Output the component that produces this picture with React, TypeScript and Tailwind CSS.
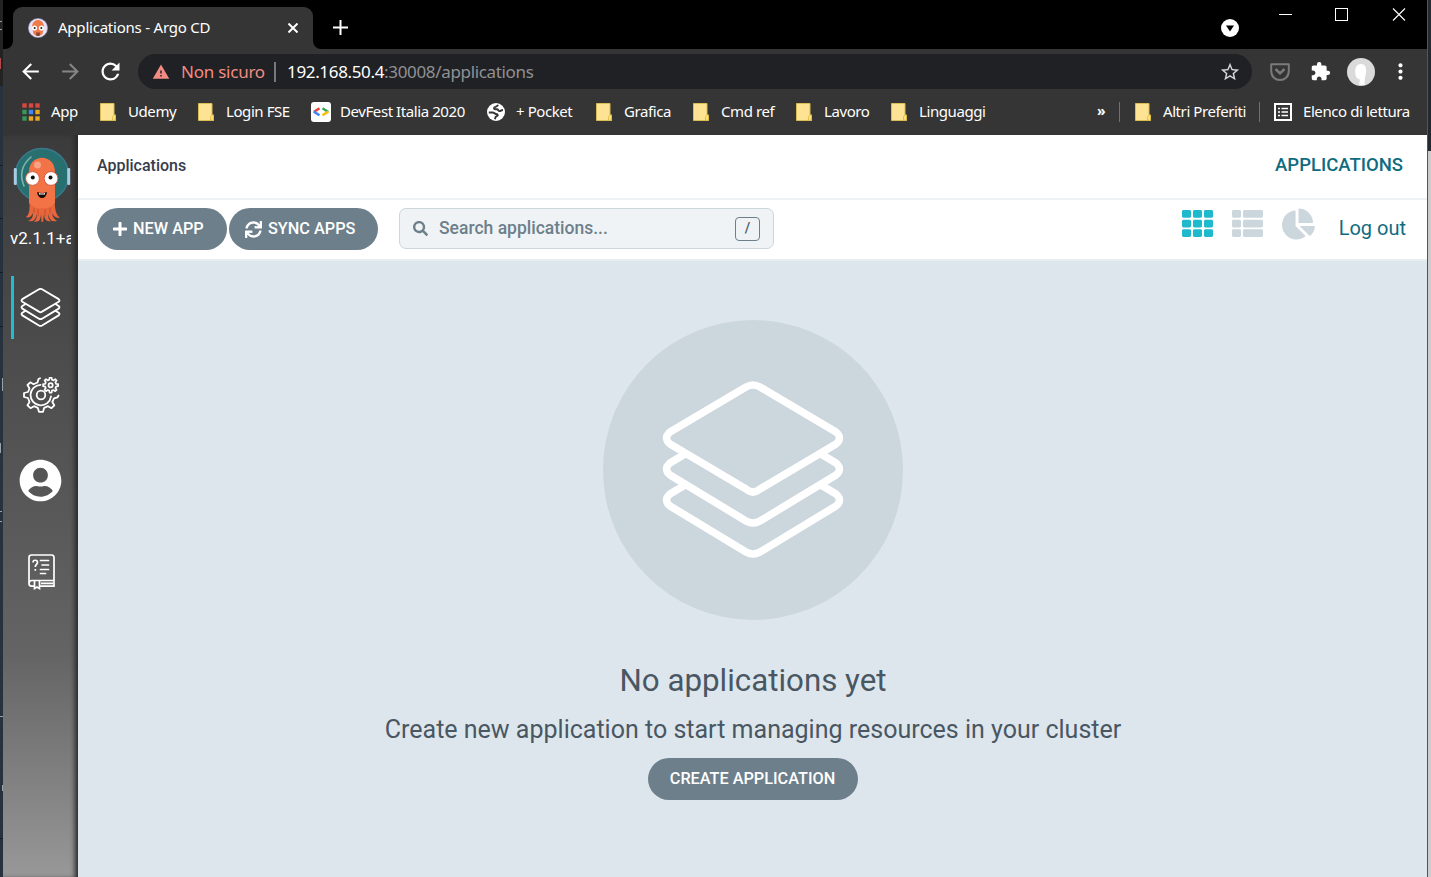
import React from 'react';
import { FaPlus, FaSearch, FaUserCircle, FaTh, FaThList, FaChartPie, FaSync } from 'react-icons/fa';
import { MdArrowBack, MdArrowForward, MdRefresh, MdWarning, MdStarBorder, MdExtension, MdMoreVert } from 'react-icons/md';

const Layers = ({ className, stroke = 7 }: { className: string; stroke?: number }) => (
  <svg className={className} viewBox="0 0 182 178" fill="none" stroke="white" strokeWidth={stroke} strokeLinejoin="round">
    <path d="M84 6 Q91 2 98 6 L174 51 Q181 57 174 63 L98 108 Q91 114 84 108 L8 63 Q1 57 8 51Z" />
    <path d="M23 73 L8 82 Q1 88 8 94 L84 140 Q91 144 98 140 L174 94 Q181 88 174 82 L159 73" />
    <path d="M23 104 L8 113 Q1 119 8 125 L84 171 Q91 175 98 171 L174 125 Q181 119 174 113 L159 104" />
  </svg>
);

const Folder = () => (
  <svg className="block h-[18px] w-[16px]" viewBox="0 0 16 18">
    <path d="M.5.5H14V12H15.5V17.5H.5Z" fill="#ffe394" stroke="#d9bd52" />
    <path d="M12.5 17V13.5L14 12H15.5V17.5Z" fill="#ffe27a" stroke="#d9b93d" strokeWidth=".8" />
  </svg>
);

const AppsGrid = () => (
  <svg className="block h-[18px] w-[18px]" viewBox="0 0 18 18">
    {['#d9473f', '#d9473f', '#d9473f', '#36995a', '#4285f4', '#e9a821', '#36995a', '#e9a821', '#e9a821'].map((c, i) => (
      <rect key={i} x={(i % 3) * 6.5 + 0.3} y={Math.floor(i / 3) * 6.5 + 0.3} width="4.4" height="4.4" fill={c} />
    ))}
  </svg>
);

const DevFest = () => (
  <svg className="block h-5 w-5" viewBox="0 0 20 20" fill="none" strokeWidth="2.5">
    <rect width="20" height="20" rx="3" fill="#fff" />
    <path d="M8.5 6.3 2.8 10" stroke="#ea4335" />
    <path d="M2.8 9.6 8.5 13.2" stroke="#4285f4" />
    <path d="M11.5 6.3 17.2 10" stroke="#34a853" />
    <path d="M17.2 9.6 11.5 13.2" stroke="#fbbc04" />
  </svg>
);

const Globe = () => (
  <svg className="block h-[18px] w-[18px]" viewBox="0 0 18 18" fill="none" stroke="#353535">
    <circle cx="9" cy="9" r="9" fill="#fff" stroke="none" />
    <path d="M1.800 9.500H5.500C7.500 9.500 7.500 11 9 11 11 11 11.500 12.800 9.500 13.200 8 13.500 8.300 15 8 16.200" strokeWidth="1.900" />
    <path d="M11 1.800C10.500 3.500 9.500 3.500 8.500 3.800 6.500 4.300 6.500 6.300 8.500 6.300H10C11.500 6.300 11 8 12.500 8S14 7 16 7" strokeWidth="1.900" />
  </svg>
);

const ReadingList = () => (
  <svg className="block h-[18px] w-[18px]" viewBox="0 0 18 18" fill="none" stroke="#fff">
    <rect x="1" y="1" width="16" height="16" strokeWidth="2" />
    <path d="M4 5.500H6M4 9H6M4 12.500H6M7.500 5.500H14M7.500 9H14M7.500 12.500H14" strokeWidth="1.700" />
  </svg>
);

const Favicon = () => (
  <svg className="block h-5 w-5" viewBox="0 0 20 20">
    <circle cx="10" cy="10" r="9.600" fill="#e8e4f4" stroke="#9e97c9" strokeWidth=".6" />
    <path d="M4 9C4 -.5 16 -.5 16 9L14.500 16Q10 20 5.500 16Z" fill="#ef7b4d" />
    <circle cx="6.500" cy="10" r="2.600" fill="#fff" />
    <circle cx="13.500" cy="10" r="2.600" fill="#fff" />
    <circle cx="6.700" cy="10" r="1" fill="#222" />
    <circle cx="13.300" cy="10" r="1" fill="#222" />
    <path d="M8 14.500H12L11.500 18H8.500Z" fill="#8c4630" />
  </svg>
);

const ArgoLogo = () => (
  <svg className="block h-[76px] w-[58px]" viewBox="0 0 58 76">
    <circle cx="29" cy="28" r="27" fill="#27706f" />
    <circle cx="29" cy="28" r="26.500" fill="none" stroke="#39788c" strokeWidth="1.500" />
    <path d="M11 39Q4 22 18 10" fill="none" stroke="#7fb2ae" strokeWidth="1.600" strokeLinecap="round" />
    <rect x=".8" y="21" width="3" height="17" rx="1.200" fill="#a9cce4" />
    <rect x="54.200" y="21" width="3" height="17" rx="1.200" fill="#a9cce4" />
    <path d="M16.500 54C17 63 16 68 13 70Q17 72 20 66C20 71 18 73 15 74Q22 76 24 67C24 71 23 73 21 74.500Q28 76 28 67L28.500 75H30L31 67Q31 75 38 74.500C36 73 35 71 35 67Q37 76 44 74Q40 72 39 66Q42 72 47 70.500C43 68 42 63 41.500 54Z" fill="#e8663b" />
    <path d="M16 56V25C16 6 42 6 42 25V56Q35 63 29 61Q23 63 16 56Z" fill="#f27346" />
    <circle cx="24.500" cy="18" r="3.500" fill="#f8a286" />
    <circle cx="19.500" cy="31.500" r="6.900" fill="#fff" stroke="#d9573a" />
    <circle cx="38" cy="31.500" r="6.900" fill="#fff" stroke="#d9573a" />
    <circle cx="19.800" cy="30.500" r="2" fill="#111" />
    <circle cx="37.500" cy="30.500" r="2" fill="#111" />
    <path d="M24 45Q29 47 34 45Q33 51 29 51T24 45" fill="#170b09" />
    <path d="M26 46Q29 47 32 46V47.500H26Z" fill="#fff" />
    <path d="M21 61V66M25 62V69M32 62V69M37 61V66" stroke="#bd482f" strokeWidth=".8" />
  </svg>
);

const gearPath = (cx: number, cy: number, r: number, inner: number, teeth: number) => {
  const pts: string[] = [];
  const step = (Math.PI * 2) / teeth;
  for (let i = 0; i < teeth; i++) {
    const a = i * step - Math.PI / 2;
    [[-0.31, inner], [-0.17, r], [0.17, r], [0.31, inner]].forEach(([o, q]) => {
      pts.push(`${(cx + Math.cos(a + o * step) * q).toFixed(2)} ${(cy + Math.sin(a + o * step) * q).toFixed(2)}`);
    });
  }
  return `M${pts.join('L')}Z`;
};

const Gears = () => (
  <svg className="block h-[36px] w-[37px]" viewBox="0 0 37 36" fill="none" stroke="#fff" strokeWidth="1.800" strokeLinejoin="round" strokeLinecap="round">
    <path d="M17 1.200 15.500 2 14.500 5.500 10.500 7.300 7.300 5.300 4.500 8 6.500 11.500 5 15 1 16V20L5 21 6.500 25 4.500 28.300 7.500 31.200 11 29.200 14.800 30.800 16 34.800H20L21.200 30.800 25 29.200 28.500 31.200 31.300 28.300 29.300 25 31 21.300 34.500 20.300 35.500 18.500" />
    <path d="M17.500 7.800A10.300 10.300 0 1 0 28 19.500" />
    <circle cx="18" cy="18" r="4.300" />
    <path d={gearPath(27.6, 8.2, 7.6, 5.6, 8)} strokeWidth="1.700" />
    <circle cx="27.600" cy="8.200" r="2.100" />
  </svg>
);

const Docs = () => (
  <svg className="block h-[36px] w-[27px]" viewBox="0 0 27 36" fill="none" stroke="#fff" strokeWidth="1.700">
    <path d="M6 32.200H3.500Q1 32 1 29.500V3.500Q1 1 3.500 1H23.500Q26 1 26 3.500V26.500H3.500Q1 27 1 29.500M12 32.200H26V26.500M13 29.300H25" />
    <path d="M6.500 27V34.500L9 33 11.500 34.500V27" />
    <path d="M12.500 6.500H20.500M14 11H20.500M12.500 15.500H20.500M12.500 19.500H17.500" strokeLinecap="round" />
    <path d="M5 8.500C5 5.500 9.500 5.500 9.500 8.500 9.500 10.500 7.300 10.300 7.300 13M7.300 15V16.800" />
  </svg>
);

const Pocket = () => (
  <svg className="block h-[18px] w-5" viewBox="0 0 20 18" fill="none" stroke="#7b7b7b" strokeWidth="2">
    <path d="M1.200 1.200H18.800V8C18.800 20 1.200 20 1.200 8Z" strokeLinejoin="round" />
    <path d="M5.500 6 10 10.300 14.500 6" strokeWidth="2.500" />
  </svg>
);

const Avatar = () => (
  <svg className="block h-7 w-7" viewBox="0 0 28 28">
    <circle cx="14" cy="14" r="14" fill="#dadada" />
    <path d="M14 6C10 6 8 9 8.200 14S10 21 13 21.500L12 26.500 17.500 27 18 19C20 14 20 6 14 6Z" fill="#fff" />
  </svg>
);

const Mark = ({ icon, label, box, gap }: { icon: React.ReactNode; label: string; box: string; gap: string }) => (
  <div className={`flex shrink-0 items-center whitespace-nowrap tracking-[-0.42px] ${box}`}>
    <div className={`shrink-0 ${gap}`}>{icon}</div>
    <span>{label}</span>
  </div>
);

function TabStrip() {
  return (
    <div className="flex h-[49px] shrink-0 bg-black text-white">
      <div className="w-[10px] bg-[#353535]"><div className="h-full w-full rounded-br-[8px] bg-black" /></div>
      <div className="flex w-[300px] flex-col bg-black pt-[7px]">
        <div className="flex h-[42px] items-center rounded-t-[9px] bg-[#353535] pl-[15px]">
          <Favicon />
          <span className="ml-[10px] w-[230px] whitespace-nowrap pb-[2px] text-[15px] tracking-[-0.22px]">Applications - Argo CD</span>
          <svg className="block h-[10px] w-[10px] shrink-0" viewBox="0 0 10 10" stroke="#fff" strokeWidth="2"><path d="M.5.5 9.500 9.500M9.500.5.5 9.500" /></svg>
        </div>
      </div>
      <div className="flex grow bg-[#353535]">
        <div className="flex grow rounded-bl-[8px] bg-black">
          <svg className="ml-[20px] mt-[20px] h-[15px] w-[15px]" viewBox="0 0 15 15" stroke="#fff" strokeWidth="2"><path d="M0 7.500H15M7.500 0V15" /></svg>
          <div className="grow" />
          <svg className="mr-[40px] mt-[19px] h-[18px] w-[18px]" viewBox="0 0 18 18"><circle cx="9" cy="9" r="9" fill="#fff" /><path d="M5 6.500H13L9 12.500Z" fill="#000" /></svg>
          <svg className="mr-[21px] mt-[8px] h-[13px] w-[127px]" viewBox="0 0 127 13" fill="none" stroke="#fff">
            <path d="M0 6.500H13" /><rect x="56.500" y=".5" width="12" height="12" /><path d="M114 .5 126 12.500M126 .5 114 12.500" strokeWidth="1.100" />
          </svg>
        </div>
      </div>
    </div>
  );
}

function Toolbar() {
  return (
    <div className="flex h-[45px] shrink-0 items-center text-white">
      <MdArrowBack className="ml-[15px] h-[25px] w-[25px]" />
      <MdArrowForward className="ml-[15px] h-[25px] w-[25px] text-[#858585]" />
      <MdRefresh className="ml-[14px] h-[27px] w-[27px]" />
      <div className="ml-[14px] flex h-[35px] w-[1114px] items-center rounded-full bg-[#202124] pl-[14px] text-[17px]">
        <MdWarning className="h-[18px] w-[18px] text-[#f28b82]" />
        <span className="ml-[11px] w-[93px] whitespace-nowrap tracking-[-0.24px] text-[#f28b82]">Non sicuro</span>
        <span className="h-5 w-[2px] bg-[#77787b]" />
        <span className="ml-[11px] grow whitespace-nowrap tracking-[-0.34px]">192.168.50.4<span className="text-[#909194]">:30008/applications</span></span>
        <MdStarBorder className="mr-[11px] h-[22px] w-[22px] text-[#d6d6d8]" />
      </div>
      <div className="ml-[18px]"><Pocket /></div>
      <MdExtension className="ml-[20px] h-[21px] w-[21px]" />
      <div className="ml-[16px]"><Avatar /></div>
      <MdMoreVert className="ml-[13px] h-[25px] w-[25px]" />
    </div>
  );
}

function Bookmarks() {
  return (
    <div className="flex h-[41px] shrink-0 items-center pb-[6px] pl-[19px] text-[15px] text-white">
      <Mark icon={<AppsGrid />} label="App" box="w-[78px]" gap="w-[29px]" />
      <Mark icon={<Folder />} label="Udemy" box="w-[98px]" gap="w-[28px]" />
      <Mark icon={<Folder />} label="Login FSE" box="w-[113px]" gap="w-[28px]" />
      <Mark icon={<DevFest />} label="DevFest Italia 2020" box="w-[176px]" gap="w-[29px]" />
      <Mark icon={<Globe />} label="+ Pocket" box="w-[109px]" gap="w-[29px]" />
      <Mark icon={<Folder />} label="Grafica" box="w-[97px]" gap="w-[28px]" />
      <Mark icon={<Folder />} label="Cmd ref" box="w-[103px]" gap="w-[28px]" />
      <Mark icon={<Folder />} label="Lavoro" box="w-[95px]" gap="w-[28px]" />
      <Mark icon={<Folder />} label="Linguaggi" box="w-[206px]" gap="w-[28px]" />
      <span className="w-[22px] pb-[3px] text-[14px] font-bold">»</span>
      <span className="mr-[15px] h-5 w-px bg-[#707070]" />
      <Mark icon={<Folder />} label="Altri Preferiti" box="w-[124px]" gap="w-[28px]" />
      <span className="mr-[14px] h-5 w-px bg-[#707070]" />
      <Mark icon={<ReadingList />} label="Elenco di lettura" box="w-[140px]" gap="w-[29px]" />
    </div>
  );
}

function Sidebar() {
  return (
    <aside className="flex w-[75px] shrink-0 flex-col bg-linear-to-b from-[#3b3b3b] via-[#646464] via-70% to-[#989898] shadow-[inset_-5px_0_5px_-2px_#292929]">
      <div className="ml-[10px] mt-[12px]"><ArgoLogo /></div>
      <div className="ml-[7px] mt-[3px] h-[24px] w-[61px] overflow-hidden whitespace-nowrap font-[Roboto] text-[17px] leading-6 text-white">v2.1.1+a</div>
      <div className="ml-[8px] mt-[26px] flex h-[63px] items-center border-l-[3px] border-[#1fbdd0] pl-[6px]"><Layers className="h-[39px] w-[41px]" stroke={8.5} /></div>
      <div className="ml-[20px] mt-[38px]"><Gears /></div>
      <FaUserCircle className="ml-[16px] mt-[46px] h-[43px] w-[43px] text-white" />
      <div className="ml-[25px] mt-[52px]"><Docs /></div>
    </aside>
  );
}

function Content() {
  return (
    <main className="flex grow flex-col bg-[#dee6ed] font-[Roboto]">
      <div className="flex h-[63px] items-center justify-between bg-white pl-[19px] pr-[24px] font-medium">
        <span className="pb-[2px] text-[16px] text-[#363c4a]">Applications</span>
        <span className="pb-[2px] text-[18.500px] text-[#0f6c80]">APPLICATIONS</span>
      </div>
      <div className="flex h-[63px] items-center border-y-2 border-b-[#e8edf0] border-t-[#eef2f4] bg-white pb-[1px] pl-[19px]">
        <button className="flex h-[42px] w-[130px] items-center rounded-full bg-[#6d7f8b] pl-[15px] text-[16.300px] font-medium text-white"><FaPlus className="mr-[5px] h-4 w-4" /><span className="whitespace-nowrap">NEW APP</span></button>
        <button className="ml-[2px] flex h-[42px] w-[149px] items-center rounded-full bg-[#6d7f8b] pl-[16px] text-[16.300px] font-medium text-white"><FaSync className="mr-[6px] h-[17px] w-[17px]" /><span className="whitespace-nowrap">SYNC APPS</span></button>
        <div className="mb-[2px] ml-[21px] flex h-[41px] w-[375px] items-center rounded-[7px] border border-[#ccd6dd] bg-[#eff3f5] pl-[13px] pr-[13px] text-[#6d7f8b]">
          <FaSearch className="mr-[11px] h-[15px] w-[15px]" /><span className="grow text-[17.500px] font-medium">Search applications...</span>
          <span className="mt-px flex h-6 w-[25px] items-center justify-center rounded-[4px] border border-[#6d7f8b] text-[14px] font-medium text-[#495763]">/</span>
        </div>
        <div className="grow" />
        <div className="flex items-center pb-[11px]">
          <FaTh className="h-[31px] w-[31px] text-[#1fb9ce]" />
          <FaThList className="ml-[19px] h-[31px] w-[31px] text-[#ccd6dd]" />
          <FaChartPie className="ml-[19px] h-[32px] w-[33px] text-[#ccd6dd]" />
        </div>
        <span className="ml-[24px] mr-[21px] whitespace-nowrap pb-[2px] text-[20px] text-[#0f6c80]">Log out</span>
      </div>
      <section className="flex flex-col items-center pt-[59px] text-[#495763]">
        <div className="flex h-[300px] w-[300px] items-center justify-center rounded-full bg-[#ccd6dd]"><Layers className="h-[178px] w-[182px]" stroke={7.5} /></div>
        <h1 className="mt-[41px] pl-px text-[31.300px] leading-10">No applications yet</h1>
        <p className="mt-[11px] pl-px text-[25.030px] leading-[36px]">Create new application to start managing resources in your cluster</p>
        <button className="mt-[10px] h-[42px] w-[210px] rounded-full bg-[#6d7f8b] text-[16.250px] font-medium text-white">CREATE APPLICATION</button>
      </section>
    </main>
  );
}

export default function App() {
  return (
    <div className="flex h-[877px] w-[1431px] overflow-hidden bg-[#1f2933] font-['Noto_Sans',sans-serif]">
      <svg className="block h-[877px] w-[3px] shrink-0" viewBox="0 0 3 877">
        <rect width="3" height="877" fill="#26333e" />
        <rect width="3" height="86" fill="#232323" />
        <path d="M0 165.500H3M0 218.500H3M0 272.500H3M0 326.500H3M0 838.500H3" stroke="#141b21" />
        <path d="M0 21.500H2M0 29.500H2M2.500 378V391M.5 443V453M0 511.500H2M0 521.500H2M0 716.500H3M2.500 785V791" stroke="#9aa3aa" />
        <path d="M.5 58V69" stroke="#b54848" />
      </svg>
      <div className="flex w-[1424px] shrink-0 flex-col bg-[#353535]">
        <TabStrip />
        <Toolbar />
        <Bookmarks />
        <div className="flex min-h-0 grow"><Sidebar /><Content /></div>
      </div>
      <div className="flex w-[4px] flex-col border-l border-[#555]"><div className="h-[151px] bg-[#202b34]" /><div className="grow bg-[#ccc]" /></div>
    </div>
  );
}
